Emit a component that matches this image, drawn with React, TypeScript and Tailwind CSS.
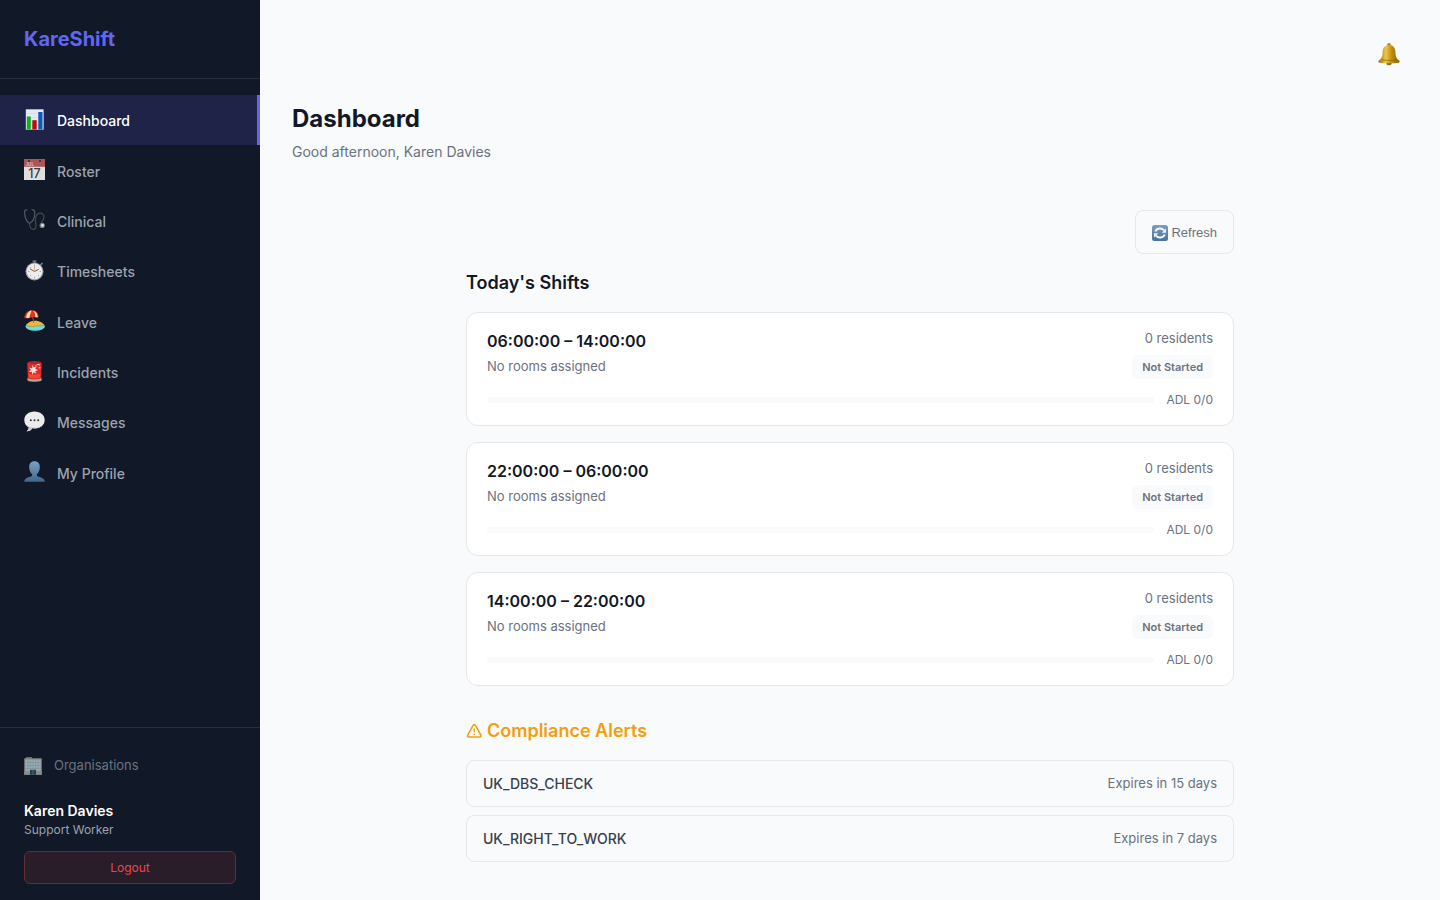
import type { ReactNode } from 'react';

interface IconProps {
  className?: string;
}

const ChartIcon = ({ className }: IconProps) => (
  <svg viewBox="0 0 21 21" className={className} aria-hidden="true">
    <rect x="1.8" y="0.3" width="17.8" height="20.4" fill="#e3eaf3" />
    <path d="M2 4.5h17.5M2 8.5h17.5M2 12.5h17.5M2 16.5h17.5" stroke="#c7d3e2" strokeWidth="0.5" />
    <rect x="2.8" y="7.5" width="4" height="13" fill="#0bb61c" />
    <rect x="8.3" y="11.2" width="4.4" height="9.3" fill="#b90d10" />
    <rect x="14.3" y="3" width="4.2" height="17.5" fill="#0b58bd" />
  </svg>
);

const CalendarIcon = ({ className }: IconProps) => (
  <svg viewBox="0 0 21 21" className={className} aria-hidden="true">
    <rect width="21" height="21" fill="#dedede" />
    <rect width="21" height="7.8" fill="#ad5456" />
    <circle cx="5" cy="1.9" r="1" fill="#38242a" />
    <circle cx="16" cy="1.9" r="1" fill="#38242a" />
    <text x="1.4" y="7" fontSize="4.6" fontWeight="700" fill="#dfb9bb" fontFamily="Inter, sans-serif">JUL</text>
    <text x="10.5" y="18.8" textAnchor="middle" fontSize="12.5" fontWeight="500" fill="#3c3c3e" fontFamily="Inter, sans-serif">17</text>
  </svg>
);

const StethoscopeIcon = ({ className }: IconProps) => (
  <svg viewBox="0 0 21 21" className={className} fill="none" aria-hidden="true">
    <path d="M3.400 1C1.300.3.400 1.600.6 3.600c.3 4.600 1.900 9 4.900 10.900C9.300 12.600 10.900 7.900 10.700 3.600 10.600 1.600 9.800.3 7.700 1" stroke="#555962" strokeWidth="1.200" />
    <path d="M5.500 14.500c.2 3.700 1.400 5.900 3.700 5.900 3.200-.1 3-3.400 2.500-6.700-.8-5 .5-9.400 4.400-9.600 3.400-.1 4.600 3.300 3.100 6.300-.9 1.900-2.100 2.800-1.800 4.400" stroke="#444852" strokeWidth="1.200" />
    <circle cx="18.200" cy="16.400" r="2.600" fill="#7b7e84" />
    <circle cx="18.500" cy="16.200" r="1.500" fill="#dededd" />
  </svg>
);

const StopwatchIcon = ({ className }: IconProps) => (
  <svg viewBox="0 0 21 21" className={className} aria-hidden="true">
    <rect x="8.600" y=".2" width="3.800" height="2.600" rx=".6" fill="#656c75" />
    <path d="m16.300 5 2.300-2" stroke="#767d85" strokeWidth="1.600" />
    <circle cx="10.500" cy="11.500" r="9" fill="#9a9fa4" />
    <circle cx="10.500" cy="11.300" r="7.900" fill="#ececea" />
    <path d="M10.500 4.700v1.500M10.500 16.700v1.500M4 11.500h1.400M15.600 11.500H17M6 7l.9.9M15 16l-.9-.9M6 16l.9-.9" stroke="#777" strokeWidth=".6" />
    <path d="m5.800 8.700 4.700 2.800 4.200-2.200" fill="none" stroke="#565656" strokeWidth=".9" />
    <path d="M10.500 5.500v6" stroke="#e79a72" strokeWidth=".8" />
  </svg>
);

const BeachIcon = ({ className }: IconProps) => (
  <svg viewBox="0 0 21 21" className={className} aria-hidden="true">
    <ellipse cx="11.200" cy="16.500" rx="9.700" ry="4.200" fill="#65dfe3" />
    <path d="M2 15.500c1.500-3 5-4.700 9-4.700s7.800 1.800 9 4.100c-3 2.300-6 .4-9 1.400-3 .9-6 .7-9-.8Z" fill="#efb43d" />
    <path d="M2 15.500c3 1.300 5.500 1.500 8.500.7 3-.9 6 .6 9.500-1.300" stroke="#b48029" strokeWidth=".6" fill="none" />
    <path d="m8.300 4.500 1.300 8" stroke="#895b39" strokeWidth="1" />
    <path d="M.3 8C.6 3 4 .3 8.200.3c3.900.1 6.700 3 6.300 7L11 7l-3.500.5-3.900 1Z" fill="#e13025" />
    <path d="M6.200.8C3.700 2.400 2.200 5 2.200 8l3.200-.2C6 4.800 6.600 2.500 7.700.4ZM9 .5c2 1.900 2.500 4.200 2.200 6.700l2.500.2C13.700 4 11.900 1.300 9 .5Z" fill="#f8e9a2" />
  </svg>
);

const SirenIcon = ({ className }: IconProps) => (
  <svg viewBox="0 0 21 21" className={className} aria-hidden="true">
    <path d="M4 16h13l.8 2.700c0 1.200-2.800 2-7.300 2s-7.300-.8-7.300-2Z" fill="#aaa49f" />
    <path d="M3.300 3.200C3.300 1 5.400.2 10.500.2s7.200.8 7.200 3l-.6 14c-1.500 1.500-11.700 1.500-13.200 0Z" fill="#df2b25" />
    <path d="M4.700 2c1.500-1.300 10-1.300 11.600 0-2.500.9-9.100.9-11.600 0Z" fill="#9c2b28" />
    <path d="M4.700 12.500c3 1.400 8.700 1.400 11.600 0l-.2 3.900c-2.600 1.200-8.600 1.200-11.200 0Z" fill="#f04635" />
    <path d="m8.700 3.600 1 3 3-1.500-1.400 3 3 .8-3.200 1.200 1.300 2.700-2.700-1.500-1.500 2.500-.3-3-3.300.2 2.500-2-2-2.600 3.100 1Z" fill="#ffe5df" />
    <path d="M12 4.700c1-1.800 3-1.500 4-.5M14.500 6.800h2" fill="none" stroke="#ffd4cb" strokeWidth="1" />
  </svg>
);

const MessageIcon = ({ className }: IconProps) => (
  <svg viewBox="0 0 21 21" className={className} aria-hidden="true">
    <path d="M10.500.5C4.700.5.300 4 .3 9c0 3.500 1.700 5.900 4.500 7.400-.2 1.900-1 2.900-2.200 3.800 2.900.1 4.600-1 5.600-2.900 7.200 1 12.500-2.800 12.500-8.300 0-5-4.400-8.500-10.200-8.500Z" fill="#ececec" />
    <path d="M2 13.800c4 3.700 12.800 3.800 17-.1-2 3-6 4.200-10.800 3.600-1 1.900-2.700 3-5.600 2.900 1.200-.9 2-1.900 2.200-3.800A9 9 0 0 1 2 13.800Z" fill="#cbcccd" />
    <circle cx="6.800" cy="9.200" r="1" fill="#333" />
    <circle cx="10.500" cy="9.200" r="1" fill="#333" />
    <circle cx="14.200" cy="9.200" r="1" fill="#333" />
  </svg>
);

const ProfileIcon = ({ className }: IconProps) => (
  <svg viewBox="0 0 21 21" className={className} aria-hidden="true">
    <defs>
      <linearGradient id="profile-fill" x2="0" y2="1">
        <stop stopColor="#7ba0c5" />
        <stop offset="1" stopColor="#42678b" />
      </linearGradient>
    </defs>
    <path d="M10.500.3c-3.600 0-5.600 2.600-5.300 6.200.2 3 1.200 5.400 2.900 6.700v1.500c-1 1.500-7.800 1.200-7.900 6h20.600c-.1-4.800-6.900-4.500-7.900-6v-1.500c1.700-1.300 2.700-3.700 2.900-6.700.3-3.600-1.700-6.200-5.300-6.200Z" fill="url(#profile-fill)" />
  </svg>
);

const BuildingIcon = ({ className }: IconProps) => (
  <svg viewBox="0 0 18 18" className={className} aria-hidden="true">
    <path d="M2 .3h6v1h9.800v16.500H.2V1.300H2Z" fill="#827f7d" />
    <path d="M1.200 2.500h15.600v12H1.200Z" fill="#9aabb3" />
    <path d="M1.200 5.500h15.600M1.200 8.500h15.600M1.200 11.500h15.600M3.800 2.500v12M6.400 2.500v12M9 2.500v12M11.600 2.500v12M14.200 2.500v12" stroke="#768a94" strokeWidth=".5" />
    <path d="M.2 14.500h17.600v3.300H.2Z" fill="#8a8c8b" />
    <path d="M6 12.800h6v5H6Z" fill="#263f4a" />
    <path d="M9 13v4.800" stroke="#6e8993" strokeWidth=".6" />
  </svg>
);

const BellIcon = ({ className }: IconProps) => (
  <svg viewBox="0 0 24 24" className={className} aria-hidden="true">
    <defs>
      <linearGradient id="bell-fill">
        <stop stopColor="#9c720c" />
        <stop offset=".35" stopColor="#edc849" />
        <stop offset=".6" stopColor="#c4920e" />
        <stop offset="1" stopColor="#82600c" />
      </linearGradient>
    </defs>
    <circle cx="12" cy="2.700" r="1.700" fill="#a57c14" />
    <ellipse cx="12" cy="21" rx="2.700" ry="2.200" fill="#936319" />
    <path d="M12 3C7.500 3 5.800 6 5.600 10c-.2 4.500-.9 6.500-3.700 8.500-1 .8-.6 2 .6 2.200 5 .8 14 .8 19 0 1.200-.2 1.600-1.400.6-2.200-2.800-2-3.500-4-3.700-8.500-.2-4-1.900-7-6.400-7Z" fill="url(#bell-fill)" />
    <path d="M4.500 17.500c4 1.200 11 1.200 15 0" fill="none" stroke="#8b650b" strokeWidth=".7" />
  </svg>
);

const RefreshIcon = ({ className }: IconProps) => (
  <svg viewBox="0 0 16 16" className={className} aria-hidden="true">
    <defs>
      <linearGradient id="refresh-fill" x2="0" y2="1">
        <stop stopColor="#79a0c3" />
        <stop offset="1" stopColor="#47719a" />
      </linearGradient>
    </defs>
    <rect width="16" height="16" rx="2.500" fill="url(#refresh-fill)" />
    <path d="M3.300 6.500C4.700 2.900 9.700 2.400 12 5.400M12.700 9.500C11.300 13.100 6.300 13.600 4 10.600" fill="none" stroke="#f4f7fa" strokeWidth="2" />
    <path d="M14 3.500v4.300H9.800ZM2 12.500V8.200h4.200Z" fill="#f4f7fa" />
  </svg>
);

const WarningIcon = ({ className }: IconProps) => (
  <svg viewBox="0 0 16 16" className={className} fill="none" stroke="currentColor" aria-hidden="true">
    <path d="M7.100 2.300 1.700 12.200c-.5.900 0 1.700 1 1.700h11.200c1 0 1.500-.8 1-1.700l-5.500-9.900c-.5-.9-1.800-.9-2.300 0Z" strokeWidth="1.500" strokeLinejoin="round" />
    <path d="M8.300 5.500v3.800M8.300 10.700v1.400" strokeWidth="1.400" />
  </svg>
);

const navItems = [
  { icon: ChartIcon, label: 'Dashboard', active: true },
  { icon: CalendarIcon, label: 'Roster' },
  { icon: StethoscopeIcon, label: 'Clinical' },
  { icon: StopwatchIcon, label: 'Timesheets' },
  { icon: BeachIcon, label: 'Leave' },
  { icon: SirenIcon, label: 'Incidents' },
  { icon: MessageIcon, label: 'Messages' },
  { icon: ProfileIcon, label: 'My Profile' },
];

const shifts = [
  { start: '06:00:00', end: '14:00:00', residents: 0, done: 0, total: 0 },
  { start: '22:00:00', end: '06:00:00', residents: 0, done: 0, total: 0 },
  { start: '14:00:00', end: '22:00:00', residents: 0, done: 0, total: 0 },
];

const alerts = [
  { name: 'UK_DBS_CHECK', days: 15 },
  { name: 'UK_RIGHT_TO_WORK', days: 7 },
];

const Sidebar = () => (
  <aside className="sticky top-0 flex h-screen w-65 shrink-0 flex-col bg-[#111827]">
    <div className="border-b border-[#292f3d] p-6">
      <div className="text-xl leading-[30px] font-bold text-[#6366f1]">KareShift</div>
    </div>

    <nav className="flex-1 overflow-y-auto py-4">
      <ul className="grid h-[403px] auto-rows-fr">
        {navItems.map((item) => (
          <li key={item.label}>
            <a
              href="#"
              className={`flex h-full items-center gap-3 border-r-3 px-6 text-sm font-medium ${
                item.active
                  ? 'border-[#6366f1] bg-[#1e2347] text-white'
                  : 'border-transparent text-[#9ca3af] hover:text-white'
              }`}
            >
              <item.icon className="mb-0.5 size-[21px] shrink-0" />
              <span className="mt-0.5">{item.label}</span>
            </a>
          </li>
        ))}
      </ul>
    </nav>

    <div className="border-t border-[#292f3d] px-6 pt-6 pb-4">
      <a href="#" className="flex h-7 items-center gap-3 text-[13px] text-[#6b7280]">
        <BuildingIcon className="size-[18px] shrink-0" />
        Organisations
      </a>
      <div className="mt-5">
        <div className="text-sm leading-[22px] font-semibold text-white">Karen Davies</div>
        <div className="text-xs leading-4 text-[#9ca3af]">Support Worker</div>
      </div>
      <button
        type="button"
        className="mt-[13px] h-[33px] w-full rounded-md border border-[#682b36] bg-[#291d2a] text-xs text-[#ef4444]"
      >
        Logout
      </button>
    </div>
  </aside>
);

const Card = ({ children }: { children: ReactNode }) => (
  <article className="rounded-xl border border-[#e5e7eb] bg-white px-5 py-4">{children}</article>
);

export default function App() {
  return (
    <div className="flex min-h-screen bg-[#f9fafb] font-['Inter',sans-serif] text-[#111827]">
      <Sidebar />

      <main className="min-w-0 flex-1 px-8 pt-8">
        <div className="flex justify-end">
          <button type="button" aria-label="Notifications" className="px-[7px] pt-[10px] pb-2">
            <BellIcon className="size-6" />
          </button>
        </div>

        <header className="mt-[27px]">
          <h1 className="text-2xl leading-9 font-bold">Dashboard</h1>
          <p className="mt-[3px] text-sm leading-6 text-[#6b7280]">Good afternoon, Karen Davies</p>
        </header>

        <div className="mx-auto mt-[46px] max-w-3xl pb-8">
          <div className="flex justify-end">
            <button
              type="button"
              className="flex h-11 items-center gap-[3px] rounded-lg border border-[#e5e7eb] px-4 pt-0.5 font-['Liberation_Sans',Arial,sans-serif] text-[13px] text-[#6b7280]"
            >
              <RefreshIcon className="size-4" />
              Refresh
            </button>
          </div>

          <section className="mt-4">
            <h2 className="text-lg leading-[26px] font-semibold">Today's Shifts</h2>
            <div className="mt-4 flex flex-col gap-4">
              {shifts.map((shift) => (
                <Card key={shift.start}>
                  <div className="flex justify-between">
                    <div>
                      <h3 className="text-base leading-6 font-semibold">
                        {shift.start} – {shift.end}
                      </h3>
                      <p className="mt-px text-[13px] leading-6 text-[#6b7280]">No rooms assigned</p>
                    </div>
                    <div className="flex flex-col items-end">
                      <p className="text-[13px] leading-[18px] text-[#6b7280]">{shift.residents} residents</p>
                      <span className="mt-2 rounded-md bg-[#f9fafb] px-[10px] text-[11px] leading-6 font-semibold text-[#6b7280]">
                        Not Started
                      </span>
                    </div>
                  </div>
                  <div className="mt-3 flex items-center gap-3">
                    <div className="h-1.5 flex-1 rounded-full bg-[#f9fafb]" />
                    <span className="text-xs leading-[18px] text-[#6b7280]">
                      ADL {shift.done}/{shift.total}
                    </span>
                  </div>
                </Card>
              ))}
            </div>
          </section>

          <section className="mt-8">
            <h2 className="flex items-center gap-[5px] text-lg leading-[26px] font-semibold text-[#f59e0b]">
              <WarningIcon className="size-4" />
              Compliance Alerts
            </h2>
            <ul className="mt-4 flex flex-col gap-2">
              {alerts.map((alert) => (
                <li
                  key={alert.name}
                  className="flex h-[47px] items-center justify-between rounded-lg border border-[#e5e7eb] px-4"
                >
                  <span className="text-sm font-medium text-[#374151]">{alert.name}</span>
                  <span className="text-[13px] text-[#6b7280]">Expires in {alert.days} days</span>
                </li>
              ))}
            </ul>
          </section>
        </div>
      </main>
    </div>
  );
}
